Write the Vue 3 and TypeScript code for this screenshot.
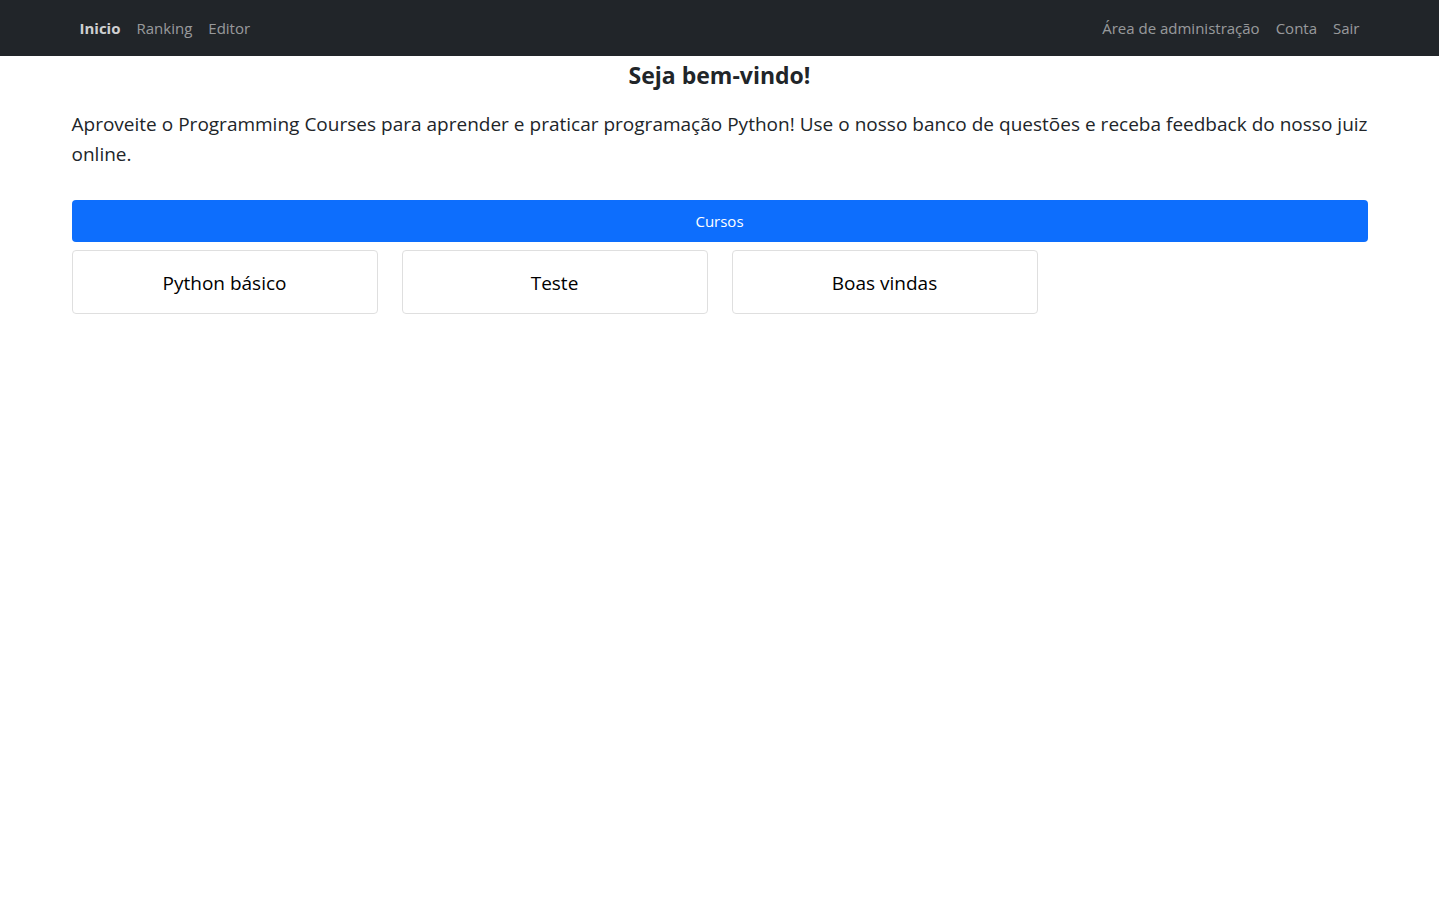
<script setup lang="ts">
interface NavLink {
  label: string
  active?: boolean
}

const mainLinks: NavLink[] = [
  { label: 'Inicio', active: true },
  { label: 'Ranking' },
  { label: 'Editor' },
]
const accountLinks: NavLink[] = [
  { label: 'Área de administração' },
  { label: 'Conta' },
  { label: 'Sair' },
]
const courses: string[] = ['Python básico', 'Teste', 'Boas vindas']
</script>

<template>
  <div class="page">
    <header class="navbar">
      <nav class="container nav-row">
        <ul class="nav-list">
          <li v-for="link in mainLinks" :key="link.label">
            <a href="#" class="nav-link" :class="{ active: link.active }">{{ link.label }}</a>
          </li>
        </ul>
        <ul class="nav-list">
          <li v-for="link in accountLinks" :key="link.label">
            <a href="#" class="nav-link">{{ link.label }}</a>
          </li>
        </ul>
      </nav>
    </header>
    <main class="container">
      <h1 class="title">Seja bem-vindo!</h1>
      <p class="lead">
        Aproveite o Programming Courses para aprender e praticar programação Python! Use o nosso
        banco de questões e receba feedback do nosso juiz online.
      </p>
      <h2 class="banner">Cursos</h2>
      <div class="courses">
        <a v-for="course in courses" :key="course" href="#" class="card">{{ course }}</a>
      </div>
    </main>
  </div>
</template>

<style>
body {
  margin: 0;
  background: #fff;
}
</style>

<style scoped>
.page {
  font-family: "Segoe UI", "Open Sans", "Noto Sans", sans-serif;
  font-size: 16px;
  line-height: 24px;
  color: #212529;
}
.container {
  box-sizing: border-box;
  width: 100%;
  max-width: 1320px;
  margin: 0 auto;
  padding: 0 12px;
}
.navbar {
  background: #212529;
  padding: 8px 0;
}
.nav-row {
  display: flex;
  justify-content: space-between;
}
.nav-list {
  display: flex;
  margin: 0;
  padding: 0;
  list-style: none;
}
.nav-link {
  display: block;
  padding: 8px;
  font-size: 15px;
  color: rgba(255, 255, 255, 0.55);
  text-decoration: none;
}
.nav-link.active {
  font-weight: 700;
  color: rgba(255, 255, 255, 0.8);
}
.title {
  margin: 5px 0 20px;
  font-size: 23px;
  line-height: 28px;
  font-weight: 700;
  text-align: center;
}
.lead {
  margin: 0 0 31px;
  font-size: 19px;
  line-height: 30px;
  font-weight: 400;
  text-align: justify;
}
.banner {
  margin: 0 0 8px;
  padding: 9px 0;
  border-radius: 4px;
  background: #0d6efd;
  color: #fff;
  font-size: 15px;
  font-weight: 400;
  text-align: center;
}
.courses {
  display: grid;
  grid-template-columns: repeat(4, 1fr);
  gap: 24px;
}
.card {
  padding: 17px 16px 15px;
  border: 1px solid #dfdfdf;
  border-radius: 4px;
  color: #000;
  font-size: 19px;
  line-height: 30px;
  text-align: center;
  text-decoration: none;
}
</style>
